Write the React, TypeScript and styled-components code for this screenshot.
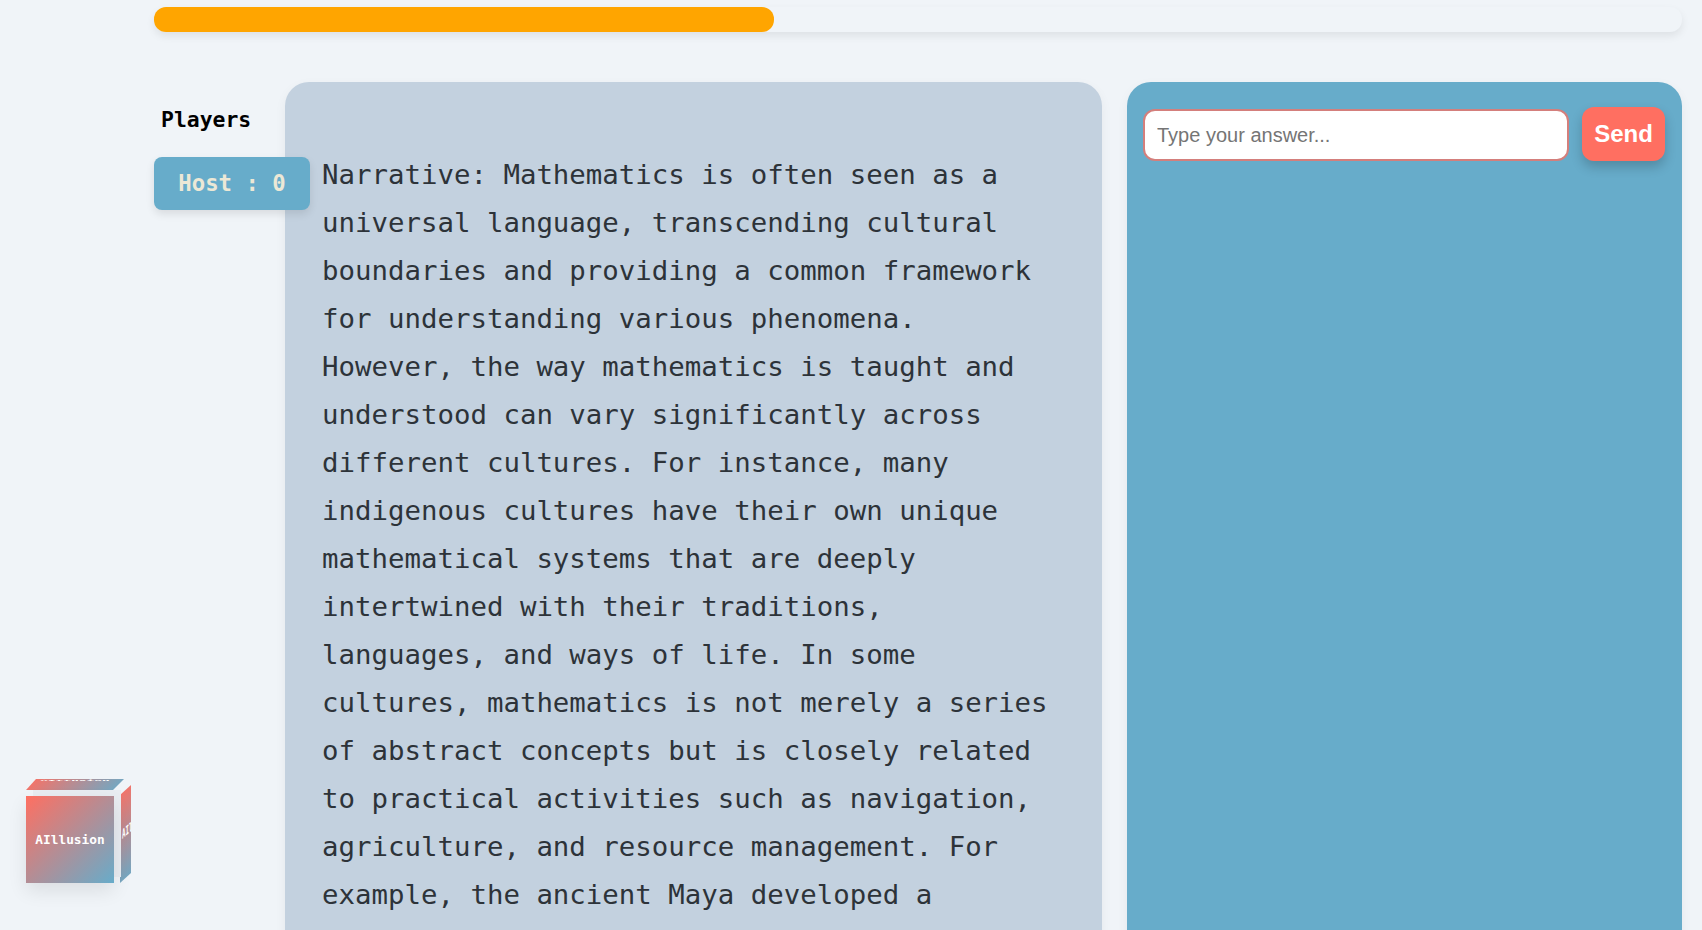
import React from 'react';
import styled, { createGlobalStyle } from 'styled-components';

const NARRATIVE =
  'Narrative: Mathematics is often seen as a universal language, transcending cultural boundaries and providing a common framework for understanding various phenomena. However, the way mathematics is taught and understood can vary significantly across different cultures. For instance, many indigenous cultures have their own unique mathematical systems that are deeply intertwined with their traditions, languages, and ways of life. In some cultures, mathematics is not merely a series of abstract concepts but is closely related to practical activities such as navigation, agriculture, and resource management. For example, the ancient Maya developed a sophisticated calendar system and a base-20 number system.';

const MONO = '"DejaVu Sans Mono", "Liberation Mono", monospace';
const GRADIENT = 'linear-gradient(135deg, #ff6f61, #67acca)';

const GlobalStyle = createGlobalStyle`
  html, body {
    margin: 0;
    height: 930px;
    overflow: hidden;
    background: #f0f4f8;
  }
  * {
    box-sizing: border-box;
  }
`;

const Page = styled.div`
  height: 930px;
  padding: 7px 20px 0 154px;
  overflow: hidden;
`;

const ProgressTrack = styled.div`
  height: 25px;
  border-radius: 12px;
  background: #f0f4f8;
  box-shadow: 0 4px 8px rgba(0, 0, 0, 0.08);
`;

const ProgressFill = styled.div`
  height: 100%;
  border-radius: 12px;
  background: #ffa500;
`;

const Game = styled.div`
  display: flex;
  margin-top: 50px;
`;

const Sidebar = styled.aside`
  flex: 0 0 131px;
  min-width: 0;
  position: relative;
  z-index: 1;
`;

const SidebarTitle = styled.h3`
  margin: 25px 0 0 7px;
  font: bold 21.4px/26px ${MONO};
  color: #000;
`;

const PlayerChip = styled.div`
  width: 156px;
  height: 53px;
  margin-top: 24px;
  border-radius: 8px;
  background: #67acca;
  color: #ece8d6;
  font: bold 22.3px/53px ${MONO};
  text-align: center;
  box-shadow: 0 4px 8px rgba(0, 0, 0, 0.1);
`;

const StoryPanel = styled.main`
  flex: 0 0 817px;
  height: 1000px;
  padding: 69px 47px 0 37px;
  border-radius: 24px;
  background: #c3d1df;
  box-shadow: 0 4px 12px rgba(0, 0, 0, 0.05);
`;

const StoryText = styled.p`
  margin: 0;
  font: 27.4px/48px ${MONO};
  color: #2d3339;
`;

const ChatPanel = styled.section`
  flex: 0 0 555px;
  height: 1000px;
  margin-left: 25px;
  padding: 25px 17px 0 16px;
  border-radius: 24px;
  background: #67acca;
  box-shadow: 0 4px 12px rgba(0, 0, 0, 0.05);
`;

const AnswerForm = styled.form`
  display: flex;
  align-items: flex-end;
  gap: 13px;
`;

const AnswerInput = styled.input`
  flex: 1;
  min-width: 0;
  height: 52px;
  padding: 0 12px;
  border: 2px solid #d47f7c;
  border-radius: 12px;
  background: #fff;
  font: 20px "Liberation Sans", Arial, sans-serif;
  outline: none;
  &::placeholder {
    color: #757575;
  }
`;

const SendButton = styled.button`
  width: 83px;
  height: 54px;
  padding: 0;
  border: 0;
  border-radius: 12px;
  background: #ff6f61;
  color: #fff;
  font: bold 24px "Liberation Sans", Arial, sans-serif;
  box-shadow: 0 6px 12px rgba(0, 0, 0, 0.2);
`;

const Cube = styled.div`
  position: absolute;
  left: 26px;
  top: 779px;
  width: 106px;
  height: 106px;
`;

const CubeFace = styled.div`
  position: absolute;
  left: 0;
  top: 17px;
  width: 88px;
  height: 87px;
  display: flex;
  align-items: center;
  justify-content: center;
  background: ${GRADIENT};
  color: #fff;
  font: bold 12.8px ${MONO};
  box-shadow: 0 8px 18px rgba(0, 0, 0, 0.09), 7px -6px 0 #e8ecf1;
`;

const CubeTop = styled.div`
  position: absolute;
  left: 0;
  top: 0;
  width: 98px;
  height: 11px;
  overflow: hidden;
  display: flex;
  justify-content: center;
  background: ${GRADIENT};
  clip-path: polygon(10px 0, 100% 0, 87px 100%, 0 100%);
`;

const CubeTopLabel = styled.span`
  color: #fff;
  font: bold 12.8px/15px ${MONO};
  height: 15px;
  transform: translateY(-6px) scaleY(0.18);
`;

const CubeSide = styled.div`
  position: absolute;
  left: 94px;
  top: 6px;
  width: 11px;
  height: 98px;
  overflow: hidden;
  display: flex;
  align-items: center;
  background: ${GRADIENT};
  clip-path: polygon(0 10px, 100% 0, 100% 88px, 0 100%);
`;

const CubeSideLabel = styled.span`
  color: #fff;
  font: bold 12.8px ${MONO};
  white-space: nowrap;
  transform: translateX(2px) skewY(-40deg) scaleX(0.45);
  transform-origin: left center;
`;

export default function App() {
  return (
    <>
      <GlobalStyle />
      <Page>
        <ProgressTrack>
          <ProgressFill style={{ width: `${(620 / 1528) * 100}%` }} />
        </ProgressTrack>
        <Game>
          <Sidebar>
            <SidebarTitle>Players</SidebarTitle>
            <PlayerChip>Host : 0</PlayerChip>
          </Sidebar>
          <StoryPanel>
            <StoryText>{NARRATIVE}</StoryText>
          </StoryPanel>
          <ChatPanel>
            <AnswerForm onSubmit={(e) => e.preventDefault()}>
              <AnswerInput placeholder="Type your answer..." />
              <SendButton type="submit">Send</SendButton>
            </AnswerForm>
          </ChatPanel>
        </Game>
      </Page>
      <Cube>
        <CubeTop>
          <CubeTopLabel>AIllusion</CubeTopLabel>
        </CubeTop>
        <CubeSide>
          <CubeSideLabel>AIllusion</CubeSideLabel>
        </CubeSide>
        <CubeFace>AIllusion</CubeFace>
      </Cube>
    </>
  );
}
